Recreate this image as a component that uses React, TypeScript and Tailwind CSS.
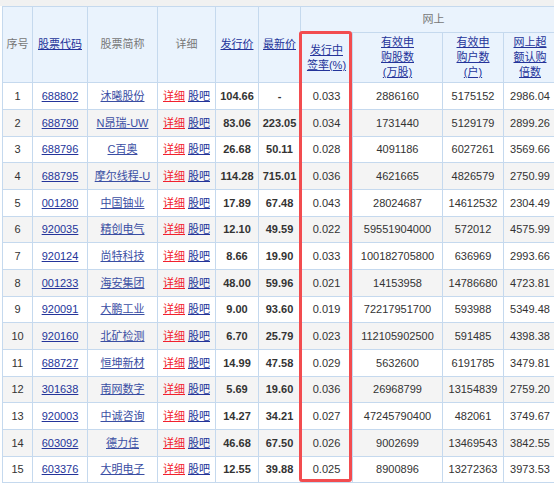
import React from 'react';

type Row = {
  no: number;
  code: string;
  name: string;
  price: string;
  latest: string;
  rate: string;
  shares: string;
  households: string;
  times: string;
};

const rows: Row[] = [
  { no: 1, code: '688802', name: '沐曦股份', price: '104.66', latest: '-', rate: '0.033', shares: '2886160', households: '5175152', times: '2986.04' },
  { no: 2, code: '688790', name: 'N昂瑞-UW', price: '83.06', latest: '223.05', rate: '0.034', shares: '1731440', households: '5129179', times: '2899.26' },
  { no: 3, code: '688796', name: 'C百奥', price: '26.68', latest: '50.11', rate: '0.028', shares: '4091186', households: '6027261', times: '3569.66' },
  { no: 4, code: '688795', name: '摩尔线程-U', price: '114.28', latest: '715.01', rate: '0.036', shares: '4621665', households: '4826579', times: '2750.99' },
  { no: 5, code: '001280', name: '中国铀业', price: '17.89', latest: '67.48', rate: '0.043', shares: '28024687', households: '14612532', times: '2304.49' },
  { no: 6, code: '920035', name: '精创电气', price: '12.10', latest: '49.59', rate: '0.022', shares: '59551904000', households: '572012', times: '4575.99' },
  { no: 7, code: '920124', name: '尚特科技', price: '8.66', latest: '19.90', rate: '0.033', shares: '100182705800', households: '636969', times: '2993.66' },
  { no: 8, code: '001233', name: '海安集团', price: '48.00', latest: '59.96', rate: '0.021', shares: '14153958', households: '14786680', times: '4723.81' },
  { no: 9, code: '920091', name: '大鹏工业', price: '9.00', latest: '93.60', rate: '0.019', shares: '72217951700', households: '593988', times: '5349.48' },
  { no: 10, code: '920160', name: '北矿检测', price: '6.70', latest: '25.79', rate: '0.023', shares: '112105902500', households: '591485', times: '4398.38' },
  { no: 11, code: '688727', name: '恒坤新材', price: '14.99', latest: '47.58', rate: '0.029', shares: '5632600', households: '6191785', times: '3479.81' },
  { no: 12, code: '301638', name: '南网数字', price: '5.69', latest: '19.60', rate: '0.036', shares: '26968799', households: '13154839', times: '2759.20' },
  { no: 13, code: '920003', name: '中诚咨询', price: '14.27', latest: '34.21', rate: '0.027', shares: '47245790400', households: '482061', times: '3749.67' },
  { no: 14, code: '603092', name: '德力佳', price: '46.68', latest: '67.50', rate: '0.026', shares: '9002699', households: '13469543', times: '3842.55' },
  { no: 15, code: '603376', name: '大明电子', price: '12.55', latest: '39.88', rate: '0.025', shares: '8900896', households: '13272363', times: '3973.53' },
];

const th = 'border border-[#c5d9ee] bg-[#eaf3fd] font-normal text-[#777] leading-[15px] align-middle text-center';
const td = 'border border-[#c5d9ee] text-center align-middle p-0';
const link = 'text-[#24349a] underline underline-offset-[1px]';

export default function App() {
  return (
    <div className="relative w-[554px] h-[483px] overflow-hidden bg-white text-[11px] text-[#333] font-['Liberation_Sans','Noto_Sans_CJK_SC',sans-serif]">
      <div className="h-[6px] bg-[#f1f1f1]" />
      <div className="pl-[2px]">
        <table className="table-fixed border-collapse w-[564px]">
          <colgroup>
            <col className="w-[30px]" />
            <col className="w-[55px]" />
            <col className="w-[70px]" />
            <col className="w-[58px]" />
            <col className="w-[43px]" />
            <col className="w-[42px]" />
            <col className="w-[52px]" />
            <col className="w-[90px]" />
            <col className="w-[61px]" />
            <col className="w-[63px]" />
          </colgroup>
          <thead>
            <tr className="h-[26px]">
              <th rowSpan={2} className={th}>序号</th>
              <th rowSpan={2} className={th}><span className={link}>股票代码</span></th>
              <th rowSpan={2} className={th}>股票简称</th>
              <th rowSpan={2} className={th}>详细</th>
              <th rowSpan={2} className={th}><span className={link}>发行价</span></th>
              <th rowSpan={2} className={th}><span className={link}>最新价</span></th>
              <th colSpan={4} className={th}>网上</th>
            </tr>
            <tr className="h-[50px]">
              <th className={th}>
                <span className={link}>发行中<br />签率(%)</span>
              </th>
              <th className={th}>
                <span className={link}>有效申<br />购股数<br />(万股)</span>
              </th>
              <th className={th}>
                <span className={link}>有效申<br />购户数<br />(户)</span>
              </th>
              <th className={`${th} pr-[10px]`}>
                <span className={link}>网上超<br />额认购<br />倍数</span>
              </th>
            </tr>
          </thead>
          <tbody>
            {rows.map((r, i) => (
              <tr key={r.no} className={`${i % 3 === 2 ? 'h-[26px]' : 'h-[27px]'} ${i % 2 === 1 ? 'bg-[#f4f4f4]' : 'bg-white'}`}>
                <td className={td}>{r.no}</td>
                <td className={td}><span className={link}>{r.code}</span></td>
                <td className={td}><span className="text-[#3a4ea3] underline underline-offset-[1px]">{r.name}</span></td>
                <td className={td}>
                  <span className="text-[#f2212d] underline underline-offset-[1px]">详细</span>
                  <span className={`${link} ml-[3px]`}>股吧</span>
                </td>
                <td className={`${td} font-bold`}>{r.price}</td>
                <td className={`${td} font-bold`}>{r.latest}</td>
                <td className={td}>{r.rate}</td>
                <td className={td}>{r.shares}</td>
                <td className={td}>{r.households}</td>
                <td className={`${td} pr-[10px]`}>{r.times}</td>
              </tr>
            ))}
          </tbody>
        </table>
      </div>
      <div className="absolute left-[299px] top-[31px] w-[53px] h-[451px] border-[3px] border-[#f24c4f] rounded-[3px]" />
    </div>
  );
}
